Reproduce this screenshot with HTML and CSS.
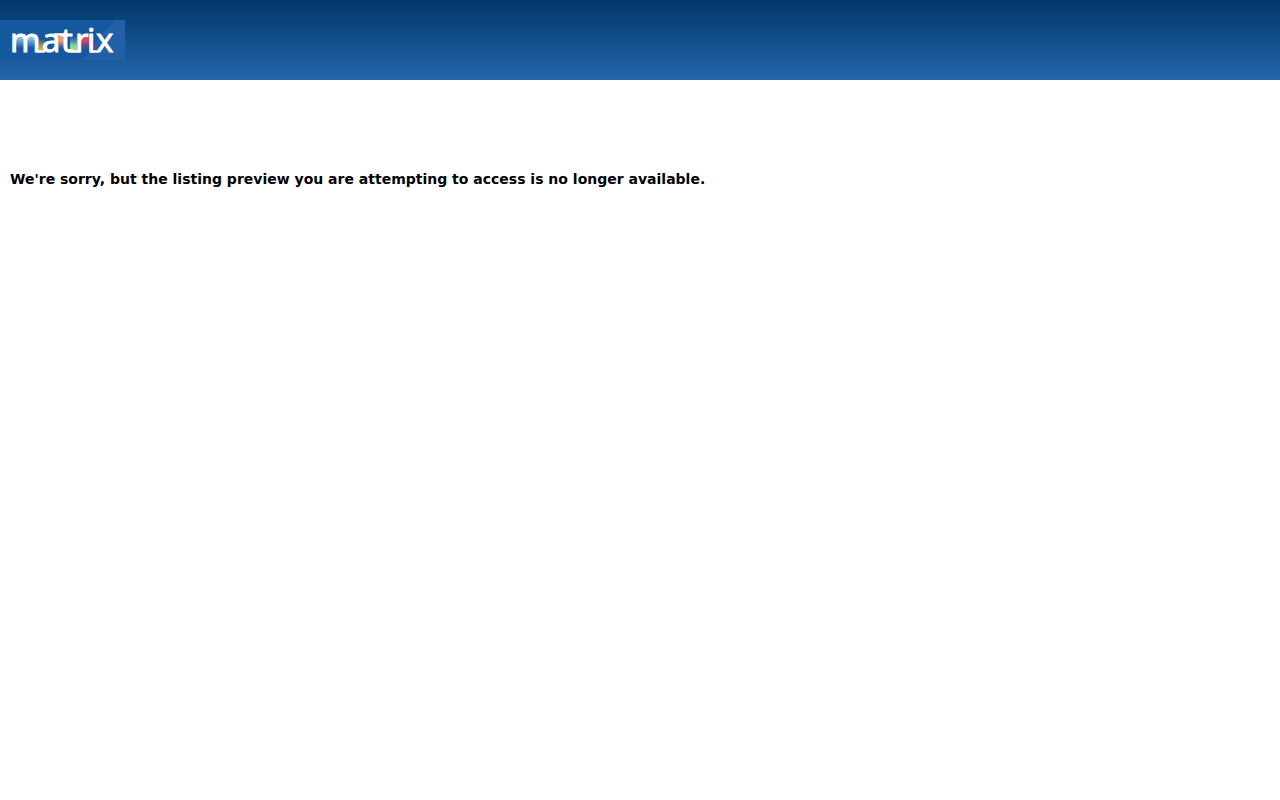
FILE: index.html
```html
<!DOCTYPE html>
<html lang="en">
<head>
<meta charset="utf-8">
<meta name="viewport" content="width=device-width, initial-scale=1">
<title>Matrix</title>
<link rel="stylesheet" href="styles.css">
</head>
<body>
<header class="banner">
  <svg class="logo" width="125" height="40" viewBox="0 0 125 40" role="img" aria-label="matrix">
    <defs>
      <linearGradient id="blue" x1="0" y1="0" x2="0" y2="1"><stop offset="0" stop-color="#88b9e8"/><stop offset="0.3" stop-color="#88b9e8"/><stop offset="1" stop-color="#88b9e8" stop-opacity="0"/></linearGradient>
      <linearGradient id="gold" x1="0" y1="1" x2="0" y2="0"><stop offset="0" stop-color="#d5b92e"/><stop offset="0.3" stop-color="#c5ad3a"/><stop offset="1" stop-color="#d5b92e" stop-opacity="0"/></linearGradient>
      <linearGradient id="orange" x1="0" y1="0" x2="0" y2="1"><stop offset="0" stop-color="#ff9563"/><stop offset="0.4" stop-color="#f09a76"/><stop offset="1" stop-color="#d59a8a" stop-opacity="0"/></linearGradient>
      <linearGradient id="green" x1="0" y1="1" x2="0" y2="0"><stop offset="0" stop-color="#a8e48b"/><stop offset="0.4" stop-color="#86cd95"/><stop offset="1" stop-color="#4d9bab" stop-opacity="0"/></linearGradient>
      <linearGradient id="red" x1="0" y1="0" x2="0" y2="1"><stop offset="0" stop-color="#ec4550"/><stop offset="0.4" stop-color="#c84660"/><stop offset="1" stop-color="#704080" stop-opacity="0"/></linearGradient>
      <linearGradient id="purple" x1="0" y1="1" x2="0" y2="0"><stop offset="0" stop-color="#7c3b8a"/><stop offset="1" stop-color="#7c3b8a" stop-opacity="0"/></linearGradient>
    </defs>
    <rect width="125" height="40" fill="#1658a0"/>
    <path d="M80 40C91 35 91 28 97 20C103 12 109 5 117 0H125V40Z" fill="#2460a8"/>
    <rect x="15" y="15" width="9" height="13" fill="url(#blue)"/>
    <rect x="27" y="15" width="10" height="13" fill="url(#blue)"/>
    <path d="M39 19H45V31H39Z" fill="url(#gold)"/>
    <path d="M57 16H67V28H58Z" fill="url(#orange)"/>
    <path d="M70 16H77V31H70Z" fill="url(#green)"/>
    <path d="M79 16H90V30H79Z" fill="url(#red)"/>
    <path d="M91 18L98 24L94 31H91Z" fill="url(#purple)"/>
    <path d="M37 31.5H45M54 14.5H67M70 31.5H79.5M90.5 31.5H97" fill="none" stroke="#fff" stroke-width="2.4"/>
    <text class="wordmark" y="32" x="10 42 61 75 87 96">matrix</text>
  </svg>
</header>
<main class="content">
  <p class="message">We're sorry, but the listing preview you are attempting to access is no longer available.</p>
</main>
</body>
</html>
```
FILE: styles.css
```css
body {
  margin: 0;
  background: #fff;
  color: #000;
  font-family: Verdana, "DejaVu Sans", sans-serif;
}

.banner {
  display: flex;
  align-items: center;
  padding: 20px 0;
  background: linear-gradient(#02376b, #2467ab);
}

.logo {
  display: block;
  overflow: visible;
}

.wordmark {
  fill: #fff;
  stroke: #fff;
  stroke-width: 1px;
  font-family: "Open Sans", "Noto Sans", sans-serif;
  font-size: 33px;
}

.content {
  padding: 90px 10px 10px;
}

.message {
  margin: 0;
  font-size: 14px;
  font-weight: bold;
  line-height: 18px;
}
```
